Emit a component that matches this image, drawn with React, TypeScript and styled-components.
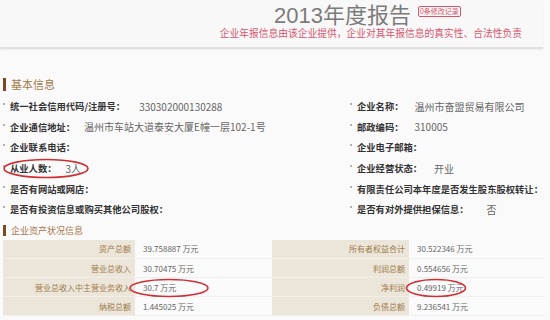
import styled, { createGlobalStyle } from 'styled-components';

const GlobalStyle = createGlobalStyle`
  html, body {
    margin: 0;
    padding: 0;
    background: #fafafa;
    font-family: "Noto Sans CJK SC", "Noto Sans", sans-serif;
  }
`;

interface InfoItem {
  label: string;
  value?: string;
  gap?: number;
}

const leftItems: InfoItem[] = [
  { label: '统一社会信用代码/注册号：', value: '330302000130288', gap: 14 },
  { label: '企业通信地址：', value: '温州市车站大道泰安大厦E幢一层102-1号', gap: 9 },
  { label: '企业联系电话：' },
  { label: '从业人数：', value: '3人', gap: 9 },
  { label: '是否有网站或网店：' },
  { label: '是否有投资信息或购买其他公司股权：' },
];

const rightItems: InfoItem[] = [
  { label: '企业名称：', value: '温州市奋盟贸易有限公司', gap: 11 },
  { label: '邮政编码：', value: '310005', gap: 11 },
  { label: '企业电子邮箱：' },
  { label: '企业经营状态：', value: '开业', gap: 12 },
  { label: '有限责任公司本年度是否发生股东股权转让：' },
  { label: '是否有对外提供担保信息：', value: '否', gap: 18 },
];

const assets = [
  ['资产总额', '39.758887 万元', '所有者权益合计', '30.522346 万元'],
  ['营业总收入', '30.70475 万元', '利润总额', '0.554656 万元'],
  ['营业总收入中主营业务收入', '30.7 万元', '净利润', '0.49919 万元'],
  ['纳税总额', '1.445025 万元', '负债总额', '9.236541 万元'],
];

const App = () => {
  return (
    <Page>
      <GlobalStyle />
      <Header>
        <TitleRow>
          <Title>2013年度报告</Title>
          <Badge>0条修改记录</Badge>
        </TitleRow>
        <Notice>企业年报信息由该企业提供，企业对其年报信息的真实性、合法性负责</Notice>
      </Header>

      <SectionTitle $size={11} $top={29}>基本信息</SectionTitle>
      <InfoGrid>
        <InfoColumn>
          {leftItems.map((item) => (
            <InfoRow key={item.label}>
              <Bullet />
              <Label>{item.label}</Label>
              {item.value && <Value $gap={item.gap ?? 8}>{item.value}</Value>}
            </InfoRow>
          ))}
        </InfoColumn>
        <InfoColumn>
          {rightItems.map((item) => (
            <InfoRow key={item.label}>
              <Bullet />
              <Label>{item.label}</Label>
              {item.value && <Value $gap={item.gap ?? 8}>{item.value}</Value>}
            </InfoRow>
          ))}
        </InfoColumn>
      </InfoGrid>

      <SectionTitle $size={9} $top={5}>企业资产状况信息</SectionTitle>
      <AssetTable>
        <colgroup>
          <col style={{ width: 132 }} />
          <col style={{ width: 137 }} />
          <col style={{ width: 137 }} />
          <col style={{ width: 136 }} />
        </colgroup>
        <tbody>
          {assets.map((row) => (
            <tr key={row[0]}>
              <KeyCell>{row[0]}</KeyCell>
              <ValCell>{row[1]}</ValCell>
              <KeyCell>{row[2]}</KeyCell>
              <ValCell>{row[3]}</ValCell>
            </tr>
          ))}
        </tbody>
      </AssetTable>

      {/* hand-drawn marks over the screenshot */}
      <Marks width="550" height="320" viewBox="0 0 550 320">
        <ellipse cx="46" cy="168.5" rx="42" ry="9" />
        <ellipse cx="169" cy="288" rx="39" ry="8.5" />
        <ellipse cx="436" cy="288" rx="29.5" ry="8.5" />
      </Marks>
    </Page>
  );
};

const Page = styled.div`
  position: relative;
  width: 550px;
  height: 320px;
  overflow: hidden;
  background: #fafafa;
`;

const Header = styled.header`
  height: 49px;
  box-sizing: border-box;
  background: #f8f8f8;
  border-bottom: 2px solid #e0e0e0;
  box-shadow: 0 1px 2px rgba(0, 0, 0, 0.06);
  margin-right: 7px;
  display: flex;
  flex-direction: column;
`;

const TitleRow = styled.div`
  display: flex;
  align-items: flex-start;
  margin-left: 274px;
  gap: 7px;
`;

const Title = styled.h1`
  margin: 0;
  padding-top: 3px;
  font-family: "Liberation Sans", "Noto Sans CJK SC", sans-serif;
  font-size: 22px;
  line-height: 25px;
  font-weight: 400;
  color: #7b7b7b;
`;

const Badge = styled.span`
  margin-top: 6px;
  padding: 0 1px;
  border: 1px solid #d4566c;
  border-radius: 2px;
  font-size: 7px;
  line-height: 9px;
  color: #d4566c;
  white-space: nowrap;
`;

const Notice = styled.p`
  margin: 0;
  padding-right: 21px;
  text-align: right;
  font-family: "Liberation Sans", "Noto Sans CJK SC", sans-serif;
  font-size: 9.75px;
  line-height: 11px;
  color: #d6566e;
  white-space: nowrap;
`;

const SectionTitle = styled.h2<{ $size: number; $top: number }>`
  margin: ${(p) => p.$top}px 0 0 3px;
  padding-left: 5px;
  border-left: 3px solid #7a4a22;
  font-size: ${(p) => p.$size}px;
  line-height: ${(p) => p.$size + 2}px;
  font-weight: 400;
  color: #a7784c;
`;

const InfoGrid = styled.div`
  display: grid;
  grid-template-columns: 347px 1fr;
  margin-top: 5px;
  padding-left: 3px;
`;

const InfoColumn = styled.div`
  display: flex;
  flex-direction: column;
`;

const InfoRow = styled.div`
  display: flex;
  align-items: center;
  height: 20.6px;
  white-space: nowrap;
`;

const Bullet = styled.span`
  width: 2px;
  height: 2px;
  margin: -4px 5px 0 0;
  border-radius: 50%;
  background: #9a9a9a;
  flex: none;
`;

const Label = styled.span`
  font-size: 9.3px;
  font-weight: 700;
  color: #333;
`;

const Value = styled.span<{ $gap: number }>`
  margin-left: ${(p) => p.$gap}px;
  font-size: 10px;
  color: #666;
`;

const AssetTable = styled.table`
  margin: 4px 0 0 3px;
  width: 542px;
  table-layout: fixed;
  border-collapse: collapse;
  border-spacing: 0;
  font-size: 8px;

  td {
    height: 19px;
    padding: 0;
    box-sizing: border-box;
    white-space: nowrap;
    overflow: hidden;
  }
`;

const KeyCell = styled.td`
  background: #ebe5da;
  border-bottom: 1px solid #f3efe8;
  text-align: right;
  padding-right: 4px !important;
  color: #a27c4a;
`;

const ValCell = styled.td`
  background: #fafafa;
  border-bottom: 1px solid #efefef;
  padding-left: 8px !important;
  color: #666;
`;

const Marks = styled.svg`
  position: absolute;
  left: 0;
  top: 0;
  pointer-events: none;

  ellipse {
    fill: none;
    stroke: #cf2e35;
    stroke-width: 1.6;
  }
`;

export default App;
